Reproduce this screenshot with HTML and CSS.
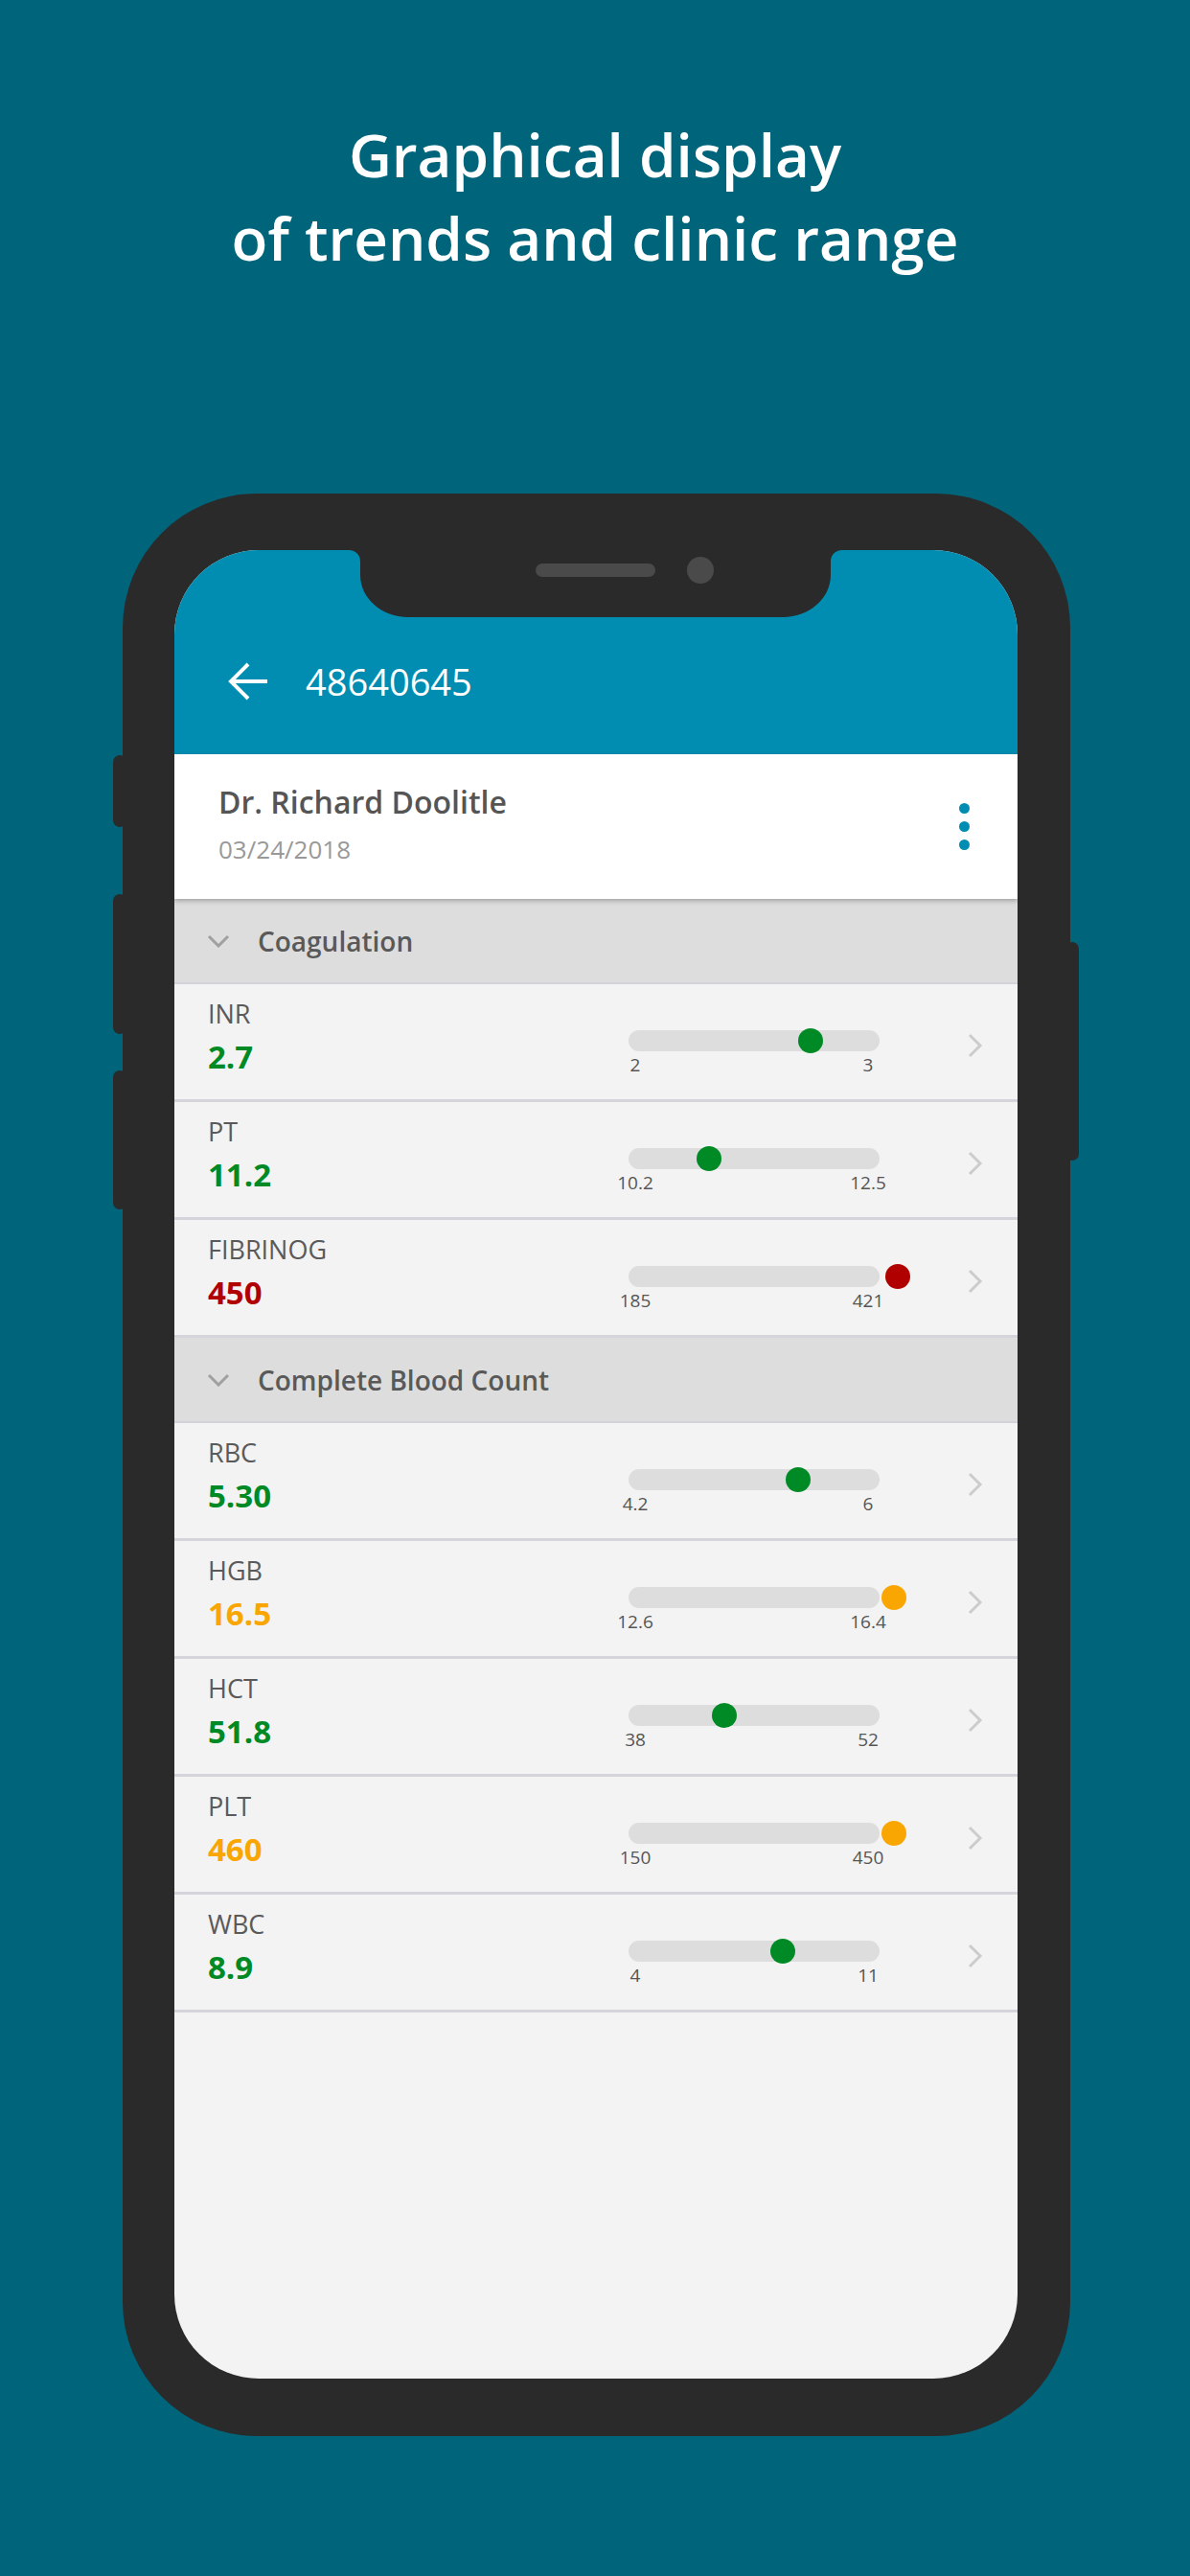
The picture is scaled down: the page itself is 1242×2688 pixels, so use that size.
FILE: index.html
```html
<!DOCTYPE html>
<html>
   <head>
      <meta name="viewport" content="width=device-width, initial-scale=1.0">
      <title>Lab Results</title>
      <link rel="stylesheet" href="styles.css">
   </head>
<body>
<div class="headline">
	<p>Graphical display</p>
	<p>of trends and clinic range</p>
</div>

<div class="phone">
	<!-- side buttons of the handset -->
	<span class="sideBtn btnMute"></span>
	<span class="sideBtn btnVolUp"></span>
	<span class="sideBtn btnVolDown"></span>
	<span class="sideBtn btnPower"></span>

	<div class="screen">
		<svg class="notch" width="515" height="70" viewBox="0 0 515 70">
			<path d="M0 0 L515 0 C509 0 503 4 503 12 L503 26 C503 50.3 480.6 70 453 70 L62 70 C34.4 70 12 50.3 12 26 L12 12 C12 4 6 0 0 0 Z" fill="#2a2a2a"/>
			<rect x="195" y="14" width="125" height="14" rx="7" fill="#4a4a4a"/>
			<circle cx="367" cy="21" r="14" fill="#4a4a4a"/>
		</svg>

		<div class="appBar">
			<svg class="backArrow" width="44" height="42" viewBox="0 0 44 42">
				<path d="M43 21 H5 M23 3 L5 21 L23 39" fill="none" stroke="#fff" stroke-width="4"/>
			</svg>
			<span class="appTitle">48640645</span>
		</div>

		<div class="doctorCard">
			<div class="doctorInfo">
				<div class="doctorName">Dr. Richard Doolitle</div>
				<div class="doctorDate">03/24/2018</div>
			</div>
			<div class="kebab"><span></span><span></span><span></span></div>
		</div>

		<!-- Coagulation group -->
		<div class="groupHead">
			<svg class="groupChevron" width="24" height="14" viewBox="0 0 24 14">
				<polyline points="2,2 12,12 22,2" fill="none" stroke="#a0a0a0" stroke-width="3"/>
			</svg>
			<span>Coagulation</span>
		</div>

		<div class="row">
			<div class="reading">
				<div class="testName">INR</div>
				<div class="testValue ok">2.7</div>
			</div>
			<div class="range">
				<div class="bar"><span class="dot ok" style="left: 72.5%"></span></div>
				<div class="ticks"><span>2</span><span>3</span></div>
			</div>
			<svg class="more" width="16" height="26" viewBox="0 0 16 26"><polyline points="2,2 13,13 2,24" fill="none" stroke="#cccccc" stroke-width="3"/></svg>
		</div>

		<div class="row">
			<div class="reading">
				<div class="testName">PT</div>
				<div class="testValue ok">11.2</div>
			</div>
			<div class="range">
				<div class="bar"><span class="dot ok" style="left: 32.1%"></span></div>
				<div class="ticks"><span>10.2</span><span>12.5</span></div>
			</div>
			<svg class="more" width="16" height="26" viewBox="0 0 16 26"><polyline points="2,2 13,13 2,24" fill="none" stroke="#cccccc" stroke-width="3"/></svg>
		</div>

		<div class="row">
			<div class="reading">
				<div class="testName">FIBRINOG</div>
				<div class="testValue high">450</div>
			</div>
			<div class="range">
				<div class="bar"><span class="dot high" style="left: 107.3%"></span></div>
				<div class="ticks"><span>185</span><span>421</span></div>
			</div>
			<svg class="more" width="16" height="26" viewBox="0 0 16 26"><polyline points="2,2 13,13 2,24" fill="none" stroke="#cccccc" stroke-width="3"/></svg>
		</div>

		<!-- Complete Blood Count group -->
		<div class="groupHead">
			<svg class="groupChevron" width="24" height="14" viewBox="0 0 24 14">
				<polyline points="2,2 12,12 22,2" fill="none" stroke="#a0a0a0" stroke-width="3"/>
			</svg>
			<span>Complete Blood Count</span>
		</div>

		<div class="row">
			<div class="reading">
				<div class="testName">RBC</div>
				<div class="testValue ok">5.30</div>
			</div>
			<div class="range">
				<div class="bar"><span class="dot ok" style="left: 67.6%"></span></div>
				<div class="ticks"><span>4.2</span><span>6</span></div>
			</div>
			<svg class="more" width="16" height="26" viewBox="0 0 16 26"><polyline points="2,2 13,13 2,24" fill="none" stroke="#cccccc" stroke-width="3"/></svg>
		</div>

		<div class="row">
			<div class="reading">
				<div class="testName">HGB</div>
				<div class="testValue warn">16.5</div>
			</div>
			<div class="range">
				<div class="bar"><span class="dot warn" style="left: 105.7%"></span></div>
				<div class="ticks"><span>12.6</span><span>16.4</span></div>
			</div>
			<svg class="more" width="16" height="26" viewBox="0 0 16 26"><polyline points="2,2 13,13 2,24" fill="none" stroke="#cccccc" stroke-width="3"/></svg>
		</div>

		<div class="row">
			<div class="reading">
				<div class="testName">HCT</div>
				<div class="testValue ok">51.8</div>
			</div>
			<div class="range">
				<div class="bar"><span class="dot ok" style="left: 38.2%"></span></div>
				<div class="ticks"><span>38</span><span>52</span></div>
			</div>
			<svg class="more" width="16" height="26" viewBox="0 0 16 26"><polyline points="2,2 13,13 2,24" fill="none" stroke="#cccccc" stroke-width="3"/></svg>
		</div>

		<div class="row">
			<div class="reading">
				<div class="testName">PLT</div>
				<div class="testValue warn">460</div>
			</div>
			<div class="range">
				<div class="bar"><span class="dot warn" style="left: 105.7%"></span></div>
				<div class="ticks"><span>150</span><span>450</span></div>
			</div>
			<svg class="more" width="16" height="26" viewBox="0 0 16 26"><polyline points="2,2 13,13 2,24" fill="none" stroke="#cccccc" stroke-width="3"/></svg>
		</div>

		<div class="row">
			<div class="reading">
				<div class="testName">WBC</div>
				<div class="testValue ok">8.9</div>
			</div>
			<div class="range">
				<div class="bar"><span class="dot ok" style="left: 61.5%"></span></div>
				<div class="ticks"><span>4</span><span>11</span></div>
			</div>
			<svg class="more" width="16" height="26" viewBox="0 0 16 26"><polyline points="2,2 13,13 2,24" fill="none" stroke="#cccccc" stroke-width="3"/></svg>
		</div>
	</div>
</div>
</body>
</html>
```

FILE: styles.css
```css
		html, body, div, span, p{
			margin: 0;
			padding: 0;
			border: 0;
		}
      body{
		  background: #00647a;
		  font-family: "Open Sans", "Liberation Sans", sans-serif;
		  width: 1242px;
		  height: 2688px;
		  overflow: hidden;
	  }
      .headline {
      	padding-top: 118px;
      	text-align: center;
      	color: #ffffff;
      	font-size: 62px;
      	line-height: 87px;
      	font-weight: 600;
      }
      /* handset frame */
      .phone {
      	position: relative;
      	width: 989px;
      	margin: 223px 0 0 128px;
      	padding: 59px 55px 60px 54px;
      	box-sizing: border-box;
      	background: #2a2a2a;
      	border-radius: 140px;
      }
      .sideBtn {
      	position: absolute;
      	width: 14px;
      	background: #2a2a2a;
      	border-radius: 9px;
      }
      .btnMute { left: -10px; top: 273px; height: 75px; }
      .btnVolUp { left: -10px; top: 418px; height: 146px; }
      .btnVolDown { left: -10px; top: 602px; height: 145px; }
      .btnPower { right: -9px; top: 468px; height: 228px; }
      .screen {
      	position: relative;
      	width: 880px;
      	height: 1908px;
      	border-radius: 88px;
      	overflow: hidden;
      	background: #f3f3f3;
      }
      .notch {
      	position: absolute;
      	top: 0;
      	left: 182px;
      }
      .appBar {
      	height: 213px;
      	padding: 60px 0 0 54px;
      	box-sizing: border-box;
      	display: flex;
      	align-items: center;
      	background: #008db1;
      }
      .backArrow {
      	display: block;
      }
      .appTitle {
      	margin-left: 39px;
      	color: #ffffff;
      	font-size: 38px;
      	line-height: 50px;
      }
      .doctorCard {
      	position: relative;
      	height: 151px;
      	padding: 30px 50px 0 46px;
      	box-sizing: border-box;
      	display: flex;
      	background: #ffffff;
      	box-shadow: 0 2px 5px rgba(0, 0, 0, 0.28);
      }
      .doctorInfo {
      	flex: 1;
      }
      .doctorName {
      	color: #555555;
      	font-size: 32px;
      	line-height: 40px;
      	font-weight: 600;
      }
      .doctorDate {
      	margin-top: 12px;
      	color: #999999;
      	font-size: 26px;
      	line-height: 34px;
      }
      .kebab {
      	display: flex;
      	flex-direction: column;
      	gap: 8px;
      	margin-top: 21px;
      }
      .kebab span {
      	width: 11px;
      	height: 11px;
      	border-radius: 50%;
      	background: #008db1;
      }
      .groupHead {
      	height: 89px;
      	padding-left: 34px;
      	box-sizing: border-box;
      	display: flex;
      	align-items: center;
      	background: #dddddd;
      	border-bottom: 2px solid #d2d2d8;
      	color: #595959;
      	font-size: 28px;
      	font-weight: 600;
      }
      .groupChevron {
      	margin-right: 29px;
      }
      .row {
      	height: 123px;
      	padding: 13px 36px 0 35px;
      	box-sizing: border-box;
      	display: flex;
      	align-items: flex-start;
      	background: #f3f3f3;
      	border-bottom: 3px solid #d4d4da;
      }
      .reading {
      	flex: 1;
      }
      .testName {
      	color: #5a5a5a;
      	font-size: 27px;
      	line-height: 36px;
      }
      .testValue {
      	margin-top: 5px;
      	font-size: 33px;
      	line-height: 43px;
      	font-weight: 700;
      }
      .range {
      	width: 262px;
      	margin-top: 35px;
      }
      .bar {
      	position: relative;
      	height: 22px;
      	border-radius: 11px;
      	background: #dddddd;
      }
      .dot {
      	position: absolute;
      	top: 50%;
      	width: 26px;
      	height: 26px;
      	border-radius: 50%;
      	transform: translate(-50%, -50%);
      }
      .ticks {
      	display: flex;
      	justify-content: space-between;
      	margin: 3px 12px 0 7px;
      	color: #555555;
      	font-size: 19px;
      	line-height: 23px;
      }
      .ticks span {
      	width: 0;
      	display: flex;
      	justify-content: center;
      	white-space: nowrap;
      }
      .more {
      	margin: 38px 0 0 92px;
      }
      .testValue.ok { color: #008a25; }
      .testValue.high { color: #b00000; }
      .testValue.warn { color: #f9a602; }
      .dot.ok { background: #008a25; }
      .dot.high { background: #b00000; }
      .dot.warn { background: #f9a602; }
```
